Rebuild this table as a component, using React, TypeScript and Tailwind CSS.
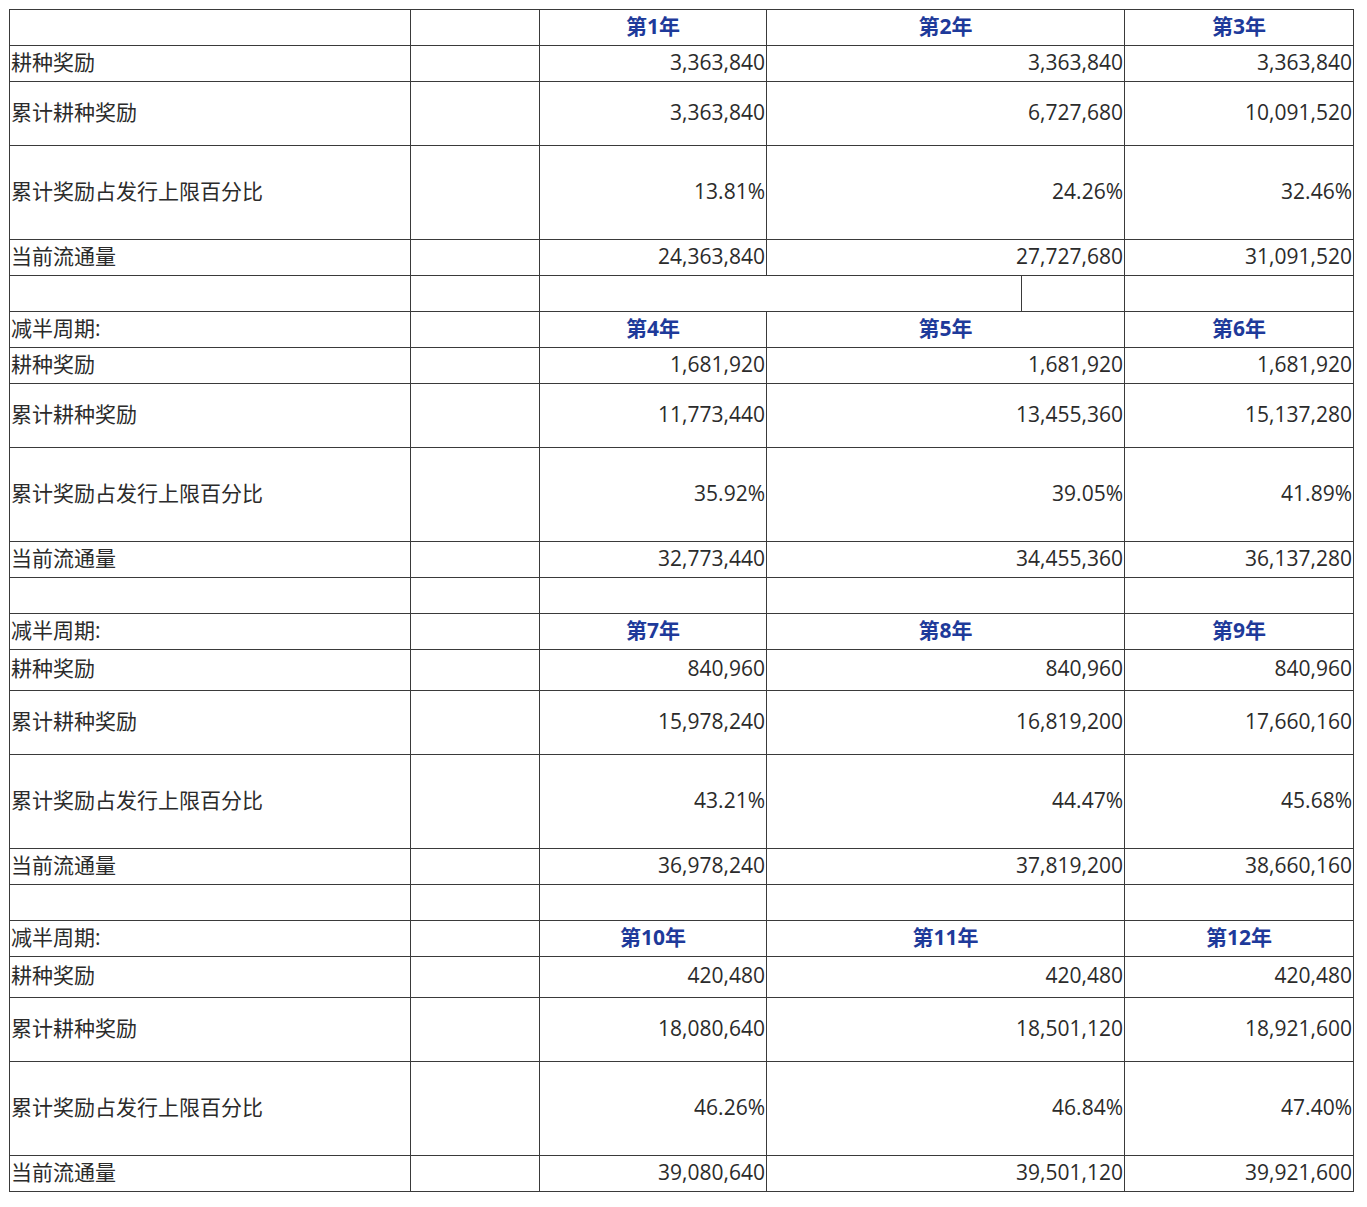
const blocks = [
  {
    label: "",
    years: ["第1年", "第2年", "第3年"],
    reward: ["3,363,840", "3,363,840", "3,363,840"],
    total: ["3,363,840", "6,727,680", "10,091,520"],
    pct: ["13.81%", "24.26%", "32.46%"],
    supply: ["24,363,840", "27,727,680", "31,091,520"],
    rewardH: "h-[36px]",
  },
  {
    label: "减半周期:",
    years: ["第4年", "第5年", "第6年"],
    reward: ["1,681,920", "1,681,920", "1,681,920"],
    total: ["11,773,440", "13,455,360", "15,137,280"],
    pct: ["35.92%", "39.05%", "41.89%"],
    supply: ["32,773,440", "34,455,360", "36,137,280"],
    rewardH: "h-[36px]",
  },
  {
    label: "减半周期:",
    years: ["第7年", "第8年", "第9年"],
    reward: ["840,960", "840,960", "840,960"],
    total: ["15,978,240", "16,819,200", "17,660,160"],
    pct: ["43.21%", "44.47%", "45.68%"],
    supply: ["36,978,240", "37,819,200", "38,660,160"],
    rewardH: "h-[41px]",
  },
  {
    label: "减半周期:",
    years: ["第10年", "第11年", "第12年"],
    reward: ["420,480", "420,480", "420,480"],
    total: ["18,080,640", "18,501,120", "18,921,600"],
    pct: ["46.26%", "46.84%", "47.40%"],
    supply: ["39,080,640", "39,501,120", "39,921,600"],
    rewardH: "h-[41px]",
  },
];

const cell = "border border-[#3a3a3a] p-0 pb-[4px] align-middle";

function DataRow({ name, values, h }: { name: string; values: string[]; h: string }) {
  return (
    <tr className={h}>
      <td className={`${cell} pl-[1px] text-left`}>{name}</td>
      <td className={cell}></td>
      <td className={`${cell} pr-[1px] text-right`}>{values[0]}</td>
      <td colSpan={2} className={`${cell} pr-[1px] text-right`}>
        {values[1]}
      </td>
      <td className={`${cell} pr-[1px] text-right`}>{values[2]}</td>
    </tr>
  );
}

export default function App() {
  return (
    <div className="min-h-[1207px] bg-white pl-[9px] pt-[9px]">
      <table
        className="table-fixed border-collapse text-[21px] leading-[28px] text-[#2b2b2b]"
        style={{ width: 1345, fontFamily: '"Open Sans", "Noto Sans CJK SC", sans-serif' }}
      >
        <colgroup>
          <col className="w-[401px]" />
          <col className="w-[129px]" />
          <col className="w-[227px]" />
          <col className="w-[255px]" />
          <col className="w-[103px]" />
          <col className="w-[229px]" />
        </colgroup>
        <tbody>
          {blocks.map((b, i) => (
            <BlockRows key={i} block={b} index={i} />
          ))}
        </tbody>
      </table>
    </div>
  );
}

function BlockRows({ block, index }: { block: (typeof blocks)[number]; index: number }) {
  return (
    <>
      {index === 1 && (
        <tr className="h-[36px]">
          <td className={cell}></td>
          <td className={cell}></td>
          <td colSpan={2} className={cell}></td>
          <td className={cell}></td>
          <td className={cell}></td>
        </tr>
      )}
      {index > 1 && (
        <tr className="h-[36px]">
          <td className={cell}></td>
          <td className={cell}></td>
          <td className={cell}></td>
          <td colSpan={2} className={cell}></td>
          <td className={cell}></td>
        </tr>
      )}
      <tr className="h-[36px]">
        <td className={`${cell} pl-[1px] text-left`}>{block.label}</td>
        <td className={cell}></td>
        <td className={`${cell} text-center font-bold text-[#1e3a9a]`}>{block.years[0]}</td>
        <td colSpan={2} className={`${cell} text-center font-bold text-[#1e3a9a]`}>
          {block.years[1]}
        </td>
        <td className={`${cell} text-center font-bold text-[#1e3a9a]`}>{block.years[2]}</td>
      </tr>
      <DataRow name="耕种奖励" values={block.reward} h={block.rewardH} />
      <DataRow name="累计耕种奖励" values={block.total} h="h-[64px]" />
      <DataRow name="累计奖励占发行上限百分比" values={block.pct} h="h-[94px]" />
      <DataRow name="当前流通量" values={block.supply} h="h-[36px]" />
    </>
  );
}
